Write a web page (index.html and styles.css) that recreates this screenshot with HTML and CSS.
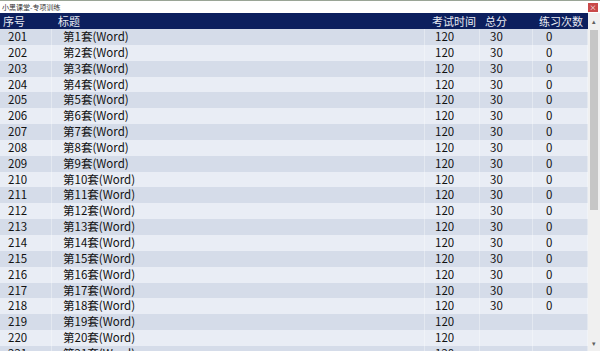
FILE: index.html
```html
<!DOCTYPE html>
<html lang="zh-CN">
<head>
    <meta charset="UTF-8">
    <title>小黑课堂-专项训练</title>
    <link rel="stylesheet" href="styles.css">
</head>
<body>
<div class="window">
    <div class="titlebar">
        <span class="title">小黑课堂-专项训练</span>
        <span class="close">&#215;</span>
    </div>
    <div class="main">
        <div class="grid">
            <div class="row head">
                <div class="c1">序号</div>
                <div class="c2">标题</div>
                <div class="c3">考试时间</div>
                <div class="c4">总分</div>
                <div class="c5">练习次数</div>
            </div>
            <div class="row"><div class="c1">201</div><div class="c2">第1套(Word)</div><div class="c3">120</div><div class="c4">30</div><div class="c5">0</div></div>
            <div class="row"><div class="c1">202</div><div class="c2">第2套(Word)</div><div class="c3">120</div><div class="c4">30</div><div class="c5">0</div></div>
            <div class="row"><div class="c1">203</div><div class="c2">第3套(Word)</div><div class="c3">120</div><div class="c4">30</div><div class="c5">0</div></div>
            <div class="row"><div class="c1">204</div><div class="c2">第4套(Word)</div><div class="c3">120</div><div class="c4">30</div><div class="c5">0</div></div>
            <div class="row"><div class="c1">205</div><div class="c2">第5套(Word)</div><div class="c3">120</div><div class="c4">30</div><div class="c5">0</div></div>
            <div class="row"><div class="c1">206</div><div class="c2">第6套(Word)</div><div class="c3">120</div><div class="c4">30</div><div class="c5">0</div></div>
            <div class="row"><div class="c1">207</div><div class="c2">第7套(Word)</div><div class="c3">120</div><div class="c4">30</div><div class="c5">0</div></div>
            <div class="row"><div class="c1">208</div><div class="c2">第8套(Word)</div><div class="c3">120</div><div class="c4">30</div><div class="c5">0</div></div>
            <div class="row"><div class="c1">209</div><div class="c2">第9套(Word)</div><div class="c3">120</div><div class="c4">30</div><div class="c5">0</div></div>
            <div class="row"><div class="c1">210</div><div class="c2">第10套(Word)</div><div class="c3">120</div><div class="c4">30</div><div class="c5">0</div></div>
            <div class="row"><div class="c1">211</div><div class="c2">第11套(Word)</div><div class="c3">120</div><div class="c4">30</div><div class="c5">0</div></div>
            <div class="row"><div class="c1">212</div><div class="c2">第12套(Word)</div><div class="c3">120</div><div class="c4">30</div><div class="c5">0</div></div>
            <div class="row"><div class="c1">213</div><div class="c2">第13套(Word)</div><div class="c3">120</div><div class="c4">30</div><div class="c5">0</div></div>
            <div class="row"><div class="c1">214</div><div class="c2">第14套(Word)</div><div class="c3">120</div><div class="c4">30</div><div class="c5">0</div></div>
            <div class="row"><div class="c1">215</div><div class="c2">第15套(Word)</div><div class="c3">120</div><div class="c4">30</div><div class="c5">0</div></div>
            <div class="row"><div class="c1">216</div><div class="c2">第16套(Word)</div><div class="c3">120</div><div class="c4">30</div><div class="c5">0</div></div>
            <div class="row"><div class="c1">217</div><div class="c2">第17套(Word)</div><div class="c3">120</div><div class="c4">30</div><div class="c5">0</div></div>
            <div class="row"><div class="c1">218</div><div class="c2">第18套(Word)</div><div class="c3">120</div><div class="c4">30</div><div class="c5">0</div></div>
            <div class="row"><div class="c1">219</div><div class="c2">第19套(Word)</div><div class="c3">120</div><div class="c4"></div><div class="c5"></div></div>
            <div class="row"><div class="c1">220</div><div class="c2">第20套(Word)</div><div class="c3">120</div><div class="c4"></div><div class="c5"></div></div>
            <div class="row"><div class="c1">221</div><div class="c2">第21套(Word)</div><div class="c3">120</div><div class="c4"></div><div class="c5"></div></div>
        </div>
        <div class="scrollbar">
            <div class="arrow">&#9652;</div>
            <div class="track">
                <div class="thumb"></div>
            </div>
            <div class="arrow">&#9662;</div>
        </div>
    </div>
</div>
</body>
</html>
```

FILE: styles.css
```css
body {
    margin: 0;
    padding: 0;
    font-family: "Noto Sans CJK SC", "Noto Sans", sans-serif;
    background-color: #fff;
}

.window {
    width: 600px;
    height: 351px;
    display: flex;
    flex-direction: column;
    overflow: hidden;
    border-top: 1px solid #9aa596;
    box-sizing: border-box;
}

.titlebar {
    height: 12px;
    flex-shrink: 0;
    display: flex;
    align-items: center;
    justify-content: space-between;
    background-color: #fff;
    padding-left: 2px;
}

.title {
    font-size: 7px;
    line-height: 12px;
    color: #333;
}

.close {
    width: 10px;
    height: 9px;
    margin-right: 2px;
    background-color: #c94a4a;
    color: #fff;
    font-size: 7px;
    line-height: 9px;
    text-align: center;
}

.main {
    flex: 1;
    display: flex;
    min-height: 0;
}

.grid {
    width: 588px;
    overflow: hidden;
}

.row {
    display: grid;
    grid-template-columns: 52px 373px 55px 53px 55px;
    height: 15.85px;
    font-size: 11.5px;
    line-height: 15.85px;
    color: #111;
}

.row > div {
    white-space: nowrap;
    overflow: hidden;
    border-right: 1px solid rgba(255, 255, 255, 0.35);
}

.row:nth-child(even) {
    background-color: #d5dce9;
}

.row:nth-child(odd) {
    background-color: #e9edf5;
}

.row.head {
    height: 16px;
    line-height: 16px;
    font-size: 11px;
    background-color: #0c1f5e;
    color: #e8eaf2;
}

.row.head > div {
    border-right: none;
}

.c1 { padding-left: 8px; }
.c2 { padding-left: 11px; }
.c3 { padding-left: 10px; }
.c4 { padding-left: 10px; }
.c5 { padding-left: 13px; }

.head .c1 { padding-left: 3px; }
.head .c2 { padding-left: 6px; }
.head .c3 { padding-left: 7px; }
.head .c4 { padding-left: 5px; }
.head .c5 { padding-left: 6px; }

.scrollbar {
    width: 12px;
    display: flex;
    flex-direction: column;
    background-color: #f0f0f0;
}

.arrow {
    height: 16px;
    font-size: 7px;
    line-height: 16px;
    text-align: center;
    color: #606060;
}

.track {
    flex: 1;
    padding: 1px 2px;
}

.thumb {
    height: 180px;
    background-color: #c6c6c6;
}
```
